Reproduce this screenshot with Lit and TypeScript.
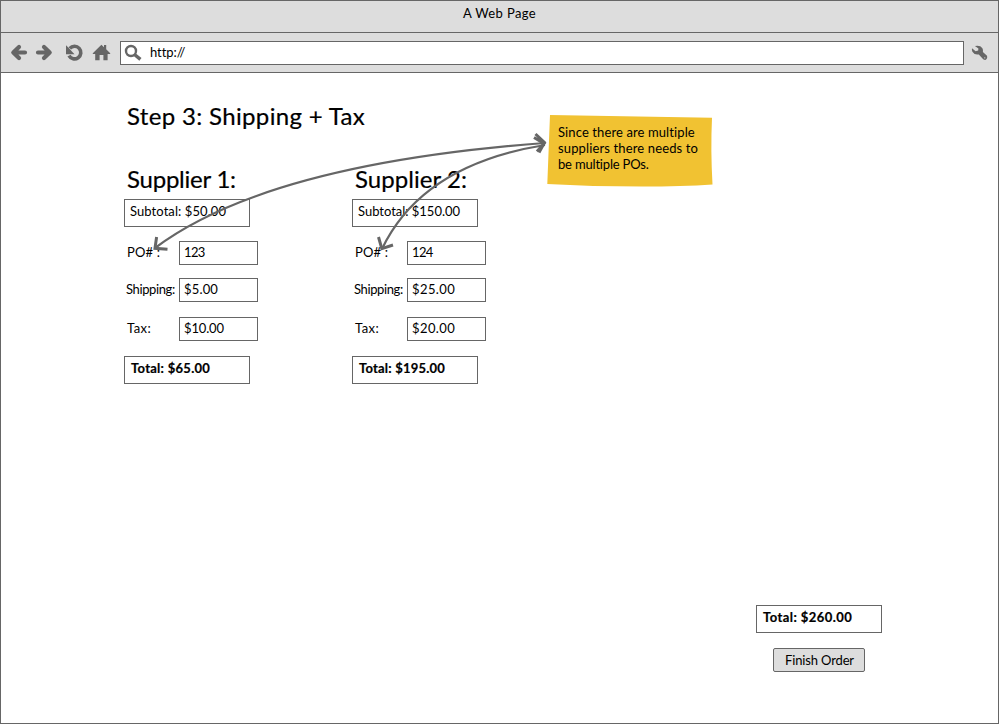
import { LitElement, html, css } from "lit";
import { customElement, property } from "lit/decorators.js";

// A single line of text tracked out to a given width.
@customElement("wire-text")
class WireText extends LitElement {
  @property({ type: Number }) w = 0;
  @property() text = "";
  static styles = css`
    :host { display: inline-block; white-space: pre; }
  `;
  render() {
    return html`<span>${this.text}</span>`;
  }
  updated() {
    const s = this.renderRoot.querySelector("span") as HTMLElement;
    s.style.letterSpacing = "0px";
    const n = s.getBoundingClientRect().width;
    s.style.letterSpacing = (this.w - n) / (this.text.length - 0.5) + "px";
  }
}

const t = (text: string, w: number) => html`<wire-text .text=${text} .w=${w}></wire-text>`;

interface Field { label: string; lw: number; value: string; vw: number; cls: string; }
interface Supplier { name: string; nw: number; sub: string; sw: number; total: string; tw: number; fields: Field[]; }

const suppliers: Supplier[] = [
  {
    name: "Supplier 1:", nw: 109, sub: "Subtotal: $50.00", sw: 96, total: "Total: $65.00", tw: 79,
    fields: [
      { label: "PO# :", lw: 33, value: "123", vw: 21, cls: "po" },
      { label: "Shipping:", lw: 49, value: "$5.00", vw: 34, cls: "ship" },
      { label: "Tax:", lw: 24, value: "$10.00", vw: 40, cls: "tax" },
    ],
  },
  {
    name: "Supplier 2:", nw: 112, sub: "Subtotal: $150.00", sw: 102, total: "Total: $195.00", tw: 86,
    fields: [
      { label: "PO# :", lw: 33, value: "124", vw: 21, cls: "po" },
      { label: "Shipping:", lw: 49, value: "$25.00", vw: 43, cls: "ship" },
      { label: "Tax:", lw: 24, value: "$20.00", vw: 43, cls: "tax" },
    ],
  },
];

@customElement("app-root")
class AppRoot extends LitElement {
  static styles = css`
    :host {
      display: block; position: relative; width: 999px; height: 724px;
      font: 13px/16px Lato, "Liberation Sans", sans-serif; color: #000;
    }
    * { box-sizing: border-box; }
    .window { height: 724px; border: 1px solid #666; background: #fff; display: flex; flex-direction: column; }
    .title { height: 32px; background: #ddd; border-bottom: 1px solid #666; text-align: center; padding-top: 4px; }
    .bar { height: 40px; background: #ddd; border-bottom: 1px solid #666; display: flex; align-items: center; }
    .icons { width: 119px; height: 39px; flex: none; }
    .url { width: 844px; height: 24px; background: #fff; border: 1px solid #666; display: flex; align-items: center; }
    .url svg { width: 29px; height: 22px; flex: none; }
    .url wire-text { padding-bottom: 2px; }
    .wrench { width: 33px; height: 39px; flex: none; }
    .page { flex: 1; padding: 28px 0 0 123px; display: flex; flex-direction: column; }
    .h { font-size: 24px; line-height: 30px; padding-left: 3px; -webkit-text-stroke: 0.2px #000; }
    .step { height: 63px; }
    .cols { display: flex; gap: 102px; }
    .supplier { width: 126px; }
    .name { height: 35px; white-space: nowrap; }
    .box { width: 126px; height: 28px; border: 1px solid #666; padding: 3px 0 0 5px; }
    .bold { font-weight: 700; padding-left: 6px; -webkit-text-stroke: 0.2px #000; }
    .field { display: flex; height: 24px; width: 134px; }
    .label { width: 55px; padding: 3px 0 0 3px; flex: none; }
    .ship .label { padding-left: 2px; }
    .input { width: 79px; height: 24px; border: 1px solid #666; padding: 2px 0 0 4px; }
    .po { margin-top: 14px; }
    .ship { margin-top: 13px; }
    .tax { margin: 15px 0; }
    .checkout { width: 126px; margin: 221px 0 0 632px; display: flex; flex-direction: column; align-items: flex-start; gap: 15px; }
    .button {
      font: inherit; color: #000; width: 92px; height: 24px; margin: 0 0 0 17px; padding: 0 0 0 1px;
      border: 1px solid #666; border-radius: 2px; background: #ddd;
    }
    .overlay { position: absolute; left: 0; top: 0; width: 999px; height: 724px; pointer-events: none; }
    .note { position: absolute; left: 547px; top: 115px; width: 166px; height: 72px; padding: 9px 0 0 11px; }
    .note svg { position: absolute; left: 0; top: 0; }
    .note div { position: relative; height: 16px; }
  `;

  render() {
    return html`
      <div class="window">
        <div class="title">${t("A Web Page", 73)}</div>
        <div class="bar">
          <svg class="icons" viewBox="1 33 119 39" fill="none" stroke="#666" stroke-linecap="round" stroke-linejoin="round">
            <path stroke-width="4.2" d="M25 52.5H14M19 47l-5.7 5.5L19 58" />
            <path stroke-width="4.2" d="M38 52.5H49M44 47l5.7 5.5L44 58" />
            <path stroke-width="3.6" stroke-linecap="butt" d="M69.8 48.4A6.3 6.3 0 1 1 69 55.6" />
            <path fill="#666" stroke="none" d="M66 45.3V54.3H74.5L71.7 51.2 70 49.3Z" />
            <path fill="#666" stroke="none" d="M92.8 53.2L101.4 44.8 104 47.2V45H106.2V49.3L110.2 53.2V54H107.6V60.2H103.4V55H99.6V60.2H95.2V54H92.8Z" />
          </svg>
          <div class="url">
            <svg viewBox="121 42 29 22" fill="none" stroke="#666">
              <circle cx="131" cy="51" r="5" stroke-width="2.4" />
              <path stroke-width="3.4" d="M134.8 54.8L140.4 59.4" />
            </svg>
            ${t("http://", 35)}
          </div>
          <svg class="wrench" viewBox="964 33 33 39">
            <path fill="#666" d="M974.9 46.1Q980 44.8 982.4 48.2 983.3 50 982.9 52L987 55.8Q987.9 58.8 985.3 60 984 60 983.2 59.3L978.8 54.4Q974.5 55.3 972.4 51.8 971.6 50 972 48.2L975.6 51.2 978.2 50.5 978.4 48.4Z" />
            <circle cx="984.8" cy="57.8" r=".6" fill="#ddd" />
          </svg>
        </div>
        <div class="page">
          <div class="h step">${t("Step 3: Shipping + Tax", 238)}</div>
          <div class="cols">
            ${suppliers.map((s) => html`
              <div class="supplier">
                <div class="h name">${t(s.name, s.nw)}</div>
                <div class="box">${t(s.sub, s.sw)}</div>
                ${s.fields.map((f) => html`
                  <div class="field ${f.cls}">
                    <div class="label">${t(f.label, f.lw)}</div>
                    <div class="input">${t(f.value, f.vw)}</div>
                  </div>`)}
                <div class="box bold">${t(s.total, s.tw)}</div>
              </div>`)}
          </div>
          <div class="checkout">
            <div class="box bold">${t("Total: $260.00", 89)}</div>
            <button class="button">${t("Finish Order", 69)}</button>
          </div>
        </div>
      </div>
      <div class="note">
        <svg width="166" height="72"><path fill="#f1c232" d="M3 0L165 2.8Q163.5 35 165.5 69.5Q135 71.5 95 71.5Q45 71.5 .3 69Z" /></svg>
        <div>${t("Since there are multiple", 137)}</div>
        <div>${t("suppliers there needs to", 140)}</div>
        <div>${t("be multiple POs.", 91)}</div>
      </div>
      <svg class="overlay" viewBox="0 0 999 724" fill="none" stroke="#666" stroke-width="2.2">
        <path d="M155 248Q267 164 545 143" />
        <path d="M382 249Q422 165 545 145" />
        <g stroke-width="3">
          <path d="M156.6 237L155 248.3L167.5 249.3" />
          <path d="M378.5 237L381.8 248.6L393 245" />
          <path d="M534 137.5L544 143.5L537 151.5M535.5 134L544.5 142.5L539 152.5" />
        </g>
      </svg>
    `;
  }
}
